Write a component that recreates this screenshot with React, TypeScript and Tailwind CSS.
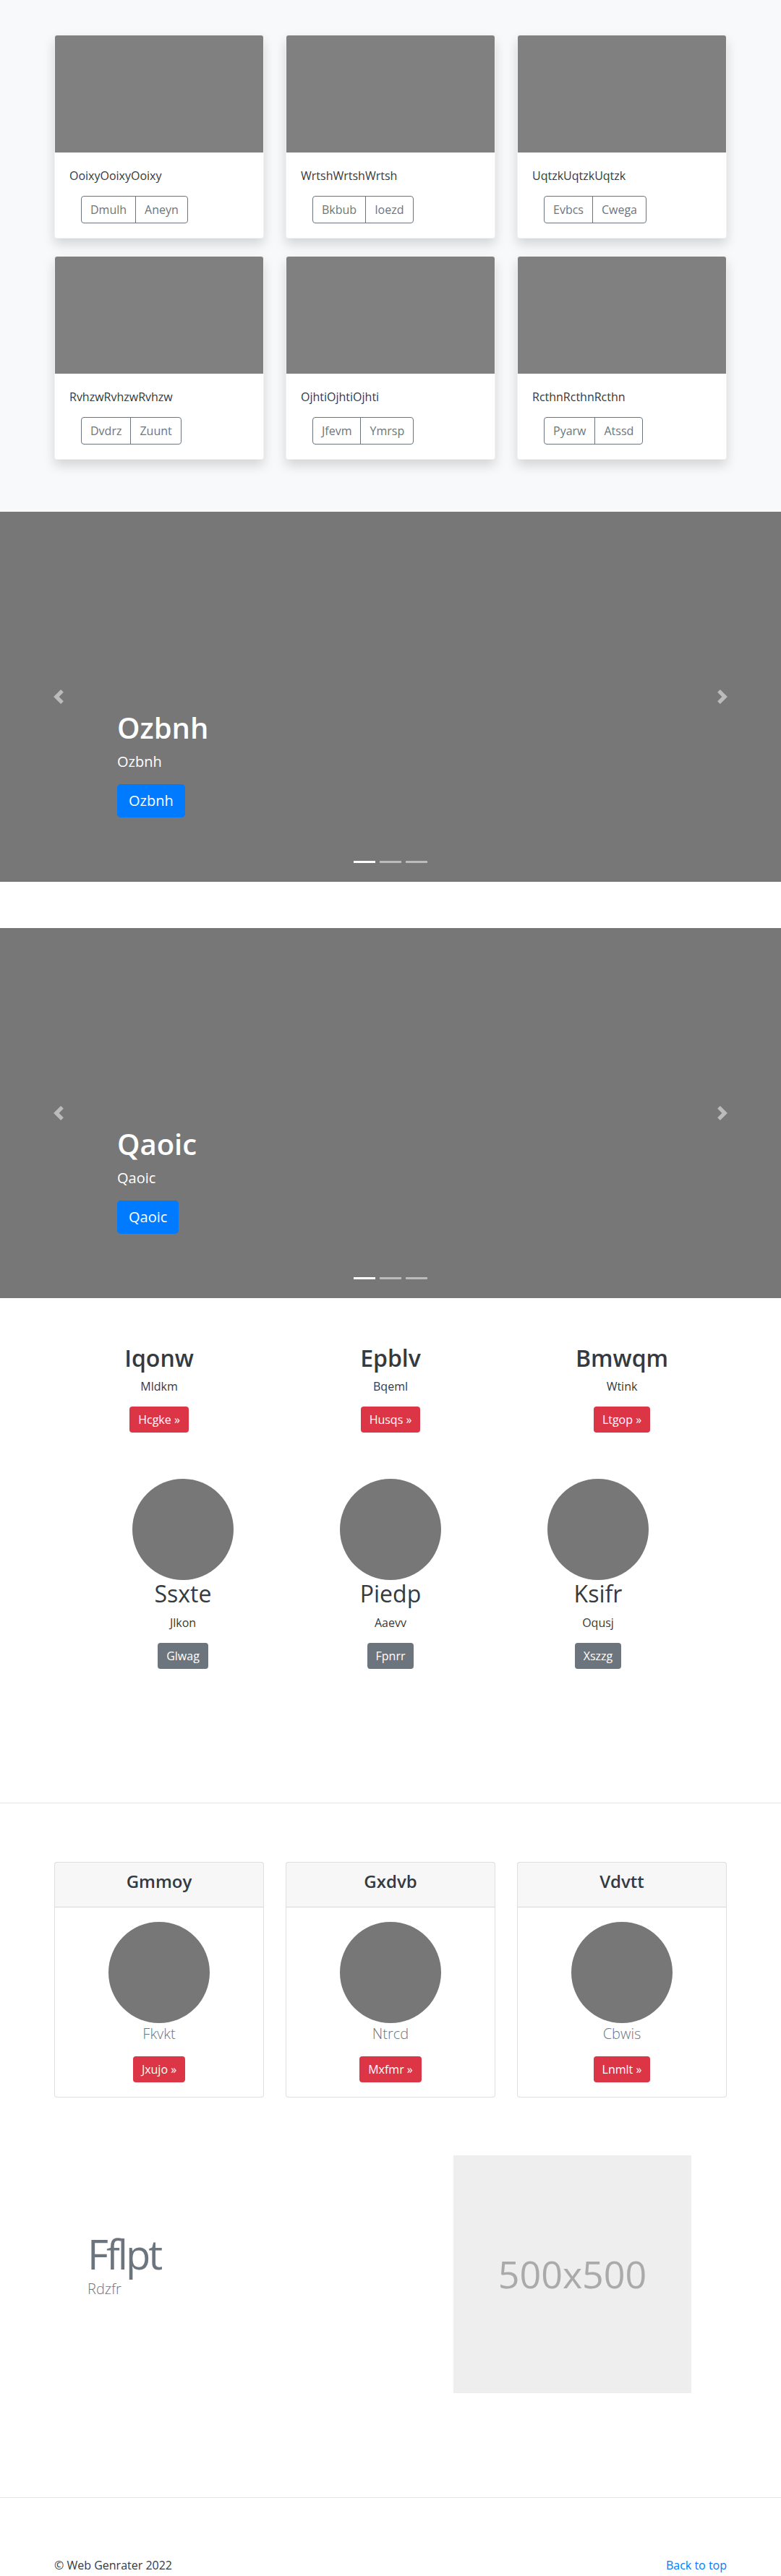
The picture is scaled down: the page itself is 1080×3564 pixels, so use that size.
const albumCards = [
  { text: "OoixyOoixyOoixy", a: "Dmulh", b: "Aneyn" },
  { text: "WrtshWrtshWrtsh", a: "Bkbub", b: "Ioezd" },
  { text: "UqtzkUqtzkUqtzk", a: "Evbcs", b: "Cwega" },
  { text: "RvhzwRvhzwRvhzw", a: "Dvdrz", b: "Zuunt" },
  { text: "OjhtiOjhtiOjhti", a: "Jfevm", b: "Ymrsp" },
  { text: "RcthnRcthnRcthn", a: "Pyarw", b: "Atssd" },
];

const marketing = [
  { title: "Iqonw", text: "Mldkm", btn: "Hcgke »" },
  { title: "Epblv", text: "Bqeml", btn: "Husqs »" },
  { title: "Bmwqm", text: "Wtink", btn: "Ltgop »" },
];

const people = [
  { title: "Ssxte", text: "Jlkon", btn: "Glwag" },
  { title: "Piedp", text: "Aaevv", btn: "Fpnrr" },
  { title: "Ksifr", text: "Oqusj", btn: "Xszzg" },
];

const pricing = [
  { title: "Gmmoy", text: "Fkvkt", btn: "Jxujo »" },
  { title: "Gxdvb", text: "Ntrcd", btn: "Mxfmr »" },
  { title: "Vdvtt", text: "Cbwis", btn: "Lnmlt »" },
];

function Carousel({ label }: { label: string }) {
  return (
    <div className="relative mb-16 h-[512px] bg-[#777]">
      <div className="absolute inset-y-0 left-0 flex w-[15%] items-center justify-center opacity-50">
        <svg width="20" height="20" viewBox="0 0 8 8" fill="#fff">
          <path d="M5.25 0l-4 4 4 4 1.5-1.5L4.25 4l2.5-2.5L5.25 0z" />
        </svg>
      </div>
      <div className="absolute inset-y-0 right-0 flex w-[15%] items-center justify-center opacity-50">
        <svg width="20" height="20" viewBox="0 0 8 8" fill="#fff">
          <path d="M2.75 0l-1.5 1.5L3.75 4l-2.5 2.5L2.75 8l4-4-4-4z" />
        </svg>
      </div>
      <div className="absolute bottom-[53px] left-[15%] right-[15%] py-5 text-left text-white">
        <h1 className="mb-2 text-[40px] font-semibold leading-[1.2]">{label}</h1>
        <p className="mb-4 text-xl leading-[1.5]">{label}</p>
        <p className="mb-4">
          <a className="inline-block rounded-[4.8px] bg-[#007bff] px-4 py-2 text-xl leading-[1.5] text-white">{label}</a>
        </p>
      </div>
      <ol className="absolute inset-x-0 bottom-[26px] flex justify-center gap-[6px]">
        <li className="h-[3px] w-[30px] bg-white" />
        <li className="h-[3px] w-[30px] bg-white/50" />
        <li className="h-[3px] w-[30px] bg-white/50" />
      </ol>
    </div>
  );
}

export default function App() {
  return (
    <main className="bg-white font-['Open_Sans','Noto_Sans',sans-serif] text-base leading-6 text-[#212529]">
      {/* album */}
      <section className="bg-[#f8f9fa] pb-[72px] pt-12">
        <div className="mx-auto grid w-[930px] grid-cols-3 gap-x-[30px] gap-y-6">
          {albumCards.map((c) => (
            <div key={c.text} className="overflow-hidden rounded border border-black/5 bg-white shadow-[0_8px_16px_rgba(0,0,0,0.15)]">
              <div className="h-[162px] bg-[#808080]" />
              <div className="p-5">
                <p className="mb-4 text-[#343a40]">{c.text}</p>
                <div className="ml-4 flex">
                  <button className="rounded-l border border-[#6c757d] px-3 py-1.5 text-[#6c757d]">{c.a}</button>
                  <button className="-ml-px rounded-r border border-[#6c757d] px-3 py-1.5 text-[#6c757d]">{c.b}</button>
                </div>
              </div>
            </div>
          ))}
        </div>
      </section>

      <Carousel label="Ozbnh" />
      <Carousel label="Qaoic" />

      {/* marketing */}
      <section>
        <div className="mx-auto grid w-[930px] grid-cols-3 gap-x-[30px] text-center">
          {marketing.map((m) => (
            <div key={m.title} className="flex flex-col items-center">
              <h2 className="mb-2 text-[32px] font-semibold leading-[1.2] text-[#343a40]">{m.title}</h2>
              <p className="mb-4 text-[#343a40]">{m.text}</p>
              <p className="mb-4">
                <a className="inline-block rounded bg-[#dc3545] px-3 py-1.5 text-white">{m.btn}</a>
              </p>
            </div>
          ))}
        </div>
        <div className="mx-auto mt-12 grid w-[861px] grid-cols-3 text-center">
          {people.map((p) => (
            <div key={p.title} className="flex flex-col items-center">
              <div className="h-[140px] w-[140px] rounded-full bg-[#777]" />
              <h2 className="mb-2 text-[32px] font-normal leading-[1.2] text-[#343a40]">{p.title}</h2>
              <p className="mb-4 text-[#343a40]">{p.text}</p>
              <p className="mb-4">
                <a className="inline-block rounded bg-[#6c757d] px-3 py-1.5 text-white">{p.btn}</a>
              </p>
            </div>
          ))}
        </div>
      </section>

      <hr className="mt-[169px] border-0 border-t border-black/10" />

      {/* pricing */}
      <section className="mx-auto mt-[81px] grid w-[930px] grid-cols-3 gap-x-[30px] text-center">
        {pricing.map((p) => (
          <div key={p.title} className="rounded border border-black/[0.125] bg-white">
            <div className="border-b border-black/[0.125] bg-black/[0.03] px-5 py-3">
              <h4 className="mb-2 text-2xl font-semibold leading-[1.2] text-[#343a40]">{p.title}</h4>
            </div>
            <div className="flex flex-col items-center p-5">
              <div className="h-[140px] w-[140px] rounded-full bg-[#777]" />
              <p className="mb-4 text-xl font-light leading-[1.5] text-[#6c757d]">{p.text}</p>
              <a className="inline-block rounded bg-[#dc3545] px-3 py-1.5 text-white">{p.btn}</a>
            </div>
          </div>
        ))}
      </section>

      {/* featurette */}
      <section className="mx-auto mt-20 grid w-[930px] grid-cols-[552px_329px]">
        <div className="pl-[46px] pt-[103px]">
          <h2 className="text-[56px] font-normal leading-[1.2] tracking-[-3px] text-[#6c757d]">Fflpt</h2>
          <p className="text-xl font-light leading-[1.5] text-[#6c757d]">Rdzfr</p>
        </div>
        <div className="flex h-[329px] w-[329px] items-center justify-center bg-[#eee]">
          <span className="text-[52px] leading-none text-[#aaa]">500x500</span>
        </div>
      </section>

      <hr className="mt-[144px] border-0 border-t border-black/10" />

      <footer className="mx-auto flex w-[930px] justify-between pb-12 pt-[81px]">
        <p className="text-[#343a40]">© Web Genrater 2022</p>
        <a className="text-[#007bff]">Back to top</a>
      </footer>
    </main>
  );
}
